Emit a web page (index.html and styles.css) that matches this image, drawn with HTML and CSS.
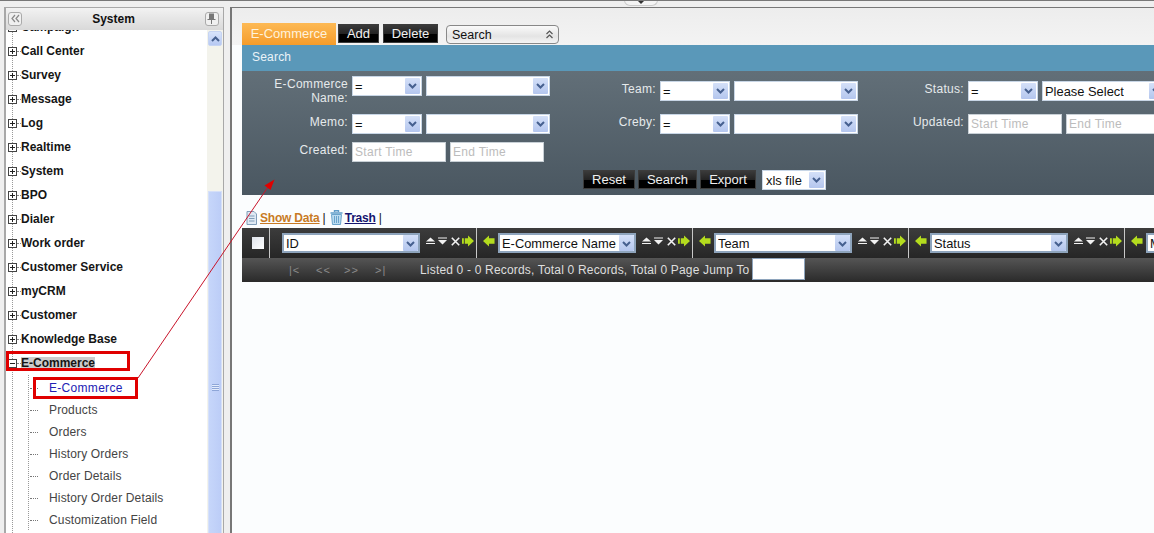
FILE: index.html
```html
<!DOCTYPE html>
<html lang="en">
<head>
<meta charset="utf-8">
<title>E-Commerce</title>
<link rel="stylesheet" href="styles.css">
</head>
<body>
<svg class="defs" width="0" height="0" aria-hidden="true">
  <symbol id="chev" viewBox="0 0 9 6"><path d="M1 1 L4.5 4.5 L8 1" fill="none" stroke="#46608f" stroke-width="2"/></symbol>
  <symbol id="up" viewBox="0 0 9 8"><path d="M4.5 0.5 L9 4.5 H0 Z M0 6 H9 V7 H0 Z" fill="#f2f2f2"/></symbol>
  <symbol id="down" viewBox="0 0 9 8"><path d="M0 0.5 H9 V1.5 H0 Z M0 3 H9 L4.5 7.5 Z" fill="#f2f2f2"/></symbol>
  <symbol id="close" viewBox="0 0 9 9"><path d="M0.8 0.8 L8.2 8.2 M8.2 0.8 L0.8 8.2" stroke="#f2f2f2" stroke-width="1.6" fill="none"/></symbol>
  <symbol id="right" viewBox="0 0 13 12"><path d="M0 3 H2 V9 H0 Z M3 3 H6.5 V0 L13 6 L6.5 12 V9 H3 Z" fill="#b4dc1e"/></symbol>
  <symbol id="left" viewBox="0 0 13 12"><path d="M12.500 3 H6.500 V0 L0 6 L6.500 12 V9 H12.500 Z" fill="#b4dc1e"/></symbol>
</svg>

<div class="page">
  <div class="handle"><svg width="8" height="4" viewBox="0 0 8 4"><path d="M1 0 H7 L4 3 Z" fill="#333"/></svg></div>

  <div class="main">
    <aside class="sidebar">
      <header class="side-head">
        <span class="head-btn"><svg width="9" height="9" viewBox="0 0 9 9"><path d="M4 1 L1 4.5 L4 8 M8 1 L5 4.5 L8 8" fill="none" stroke="#888" stroke-width="1.2"/></svg></span>
        <strong class="side-title">System</strong>
        <span class="head-btn"><svg width="9" height="11" viewBox="0 0 9 11"><path d="M2 0.5 H7 V6 H8.5 V7 H5 V11 H4 V7 H0.5 V6 H2 Z" fill="#777"/></svg></span>
      </header>
      <div class="side-body">
        <nav class="tree-view">
          <ul class="tree">
            <li class="node"><i class="box"></i><span class="dots"></span>Campaign</li>
            <li class="node"><i class="box"></i><span class="dots"></span>Call Center</li>
            <li class="node"><i class="box"></i><span class="dots"></span>Survey</li>
            <li class="node"><i class="box"></i><span class="dots"></span>Message</li>
            <li class="node"><i class="box"></i><span class="dots"></span>Log</li>
            <li class="node"><i class="box"></i><span class="dots"></span>Realtime</li>
            <li class="node"><i class="box"></i><span class="dots"></span>System</li>
            <li class="node"><i class="box"></i><span class="dots"></span>BPO</li>
            <li class="node"><i class="box"></i><span class="dots"></span>Dialer</li>
            <li class="node"><i class="box"></i><span class="dots"></span>Work order</li>
            <li class="node"><i class="box"></i><span class="dots"></span>Customer Service</li>
            <li class="node"><i class="box"></i><span class="dots"></span>myCRM</li>
            <li class="node"><i class="box"></i><span class="dots"></span>Customer</li>
            <li class="node"><i class="box"></i><span class="dots"></span>Knowledge Base</li>
            <li class="node"><i class="box open"></i><span class="dots"></span><span class="picked">E-Commerce</span></li>
          </ul>
          <ul class="subtree">
            <li class="leaf current">E-Commerce</li>
            <li class="leaf">Products</li>
            <li class="leaf">Orders</li>
            <li class="leaf">History Orders</li>
            <li class="leaf">Order Details</li>
            <li class="leaf">History Order Details</li>
            <li class="leaf">Customization Field</li>
          </ul>
        </nav>
        <div class="scrollbar">
          <div class="scroll-up"><svg class="flip" width="9" height="6"><use href="#chev"/></svg></div>
          <div class="scroll-thumb"><span class="grip"></span></div>
        </div>
      </div>
    </aside>

    <main class="content">
      <div class="toolbar">
        <span class="tab">E-Commerce</span>
        <span class="black-btn add">Add</span>
        <span class="black-btn del">Delete</span>
        <span class="mode-select">Search<svg width="9" height="9" viewBox="0 0 9 9"><path d="M1.5 4 L4.5 1 L7.5 4 M1.5 8 L4.5 5 L7.5 8" fill="none" stroke="#555" stroke-width="1.2"/></svg></span>
      </div>
      <div class="search-title">Search</div>
      <form class="search-form">
        <div class="grid">
          <div class="field"><label class="lbl">E-Commerce Name:</label><div class="sel s70"><span>=</span><svg class="arrow"><use href="#chev" x="3" y="5" width="9" height="6"/></svg></div><div class="sel s124"><span></span><svg class="arrow"><use href="#chev" x="3" y="5" width="9" height="6"/></svg></div></div>
          <div class="field mid"><label class="lbl">Team:</label><div class="sel s70"><span>=</span><svg class="arrow"><use href="#chev" x="3" y="5" width="9" height="6"/></svg></div><div class="sel s124"><span></span><svg class="arrow"><use href="#chev" x="3" y="5" width="9" height="6"/></svg></div></div>
          <div class="field mid"><label class="lbl">Status:</label><div class="sel s70"><span>=</span><svg class="arrow"><use href="#chev" x="3" y="5" width="9" height="6"/></svg></div><div class="sel s124"><span>Please Select</span><svg class="arrow"><use href="#chev" x="3" y="5" width="9" height="6"/></svg></div></div>

          <div class="field"><label class="lbl">Memo:</label><div class="sel s70"><span>=</span><svg class="arrow"><use href="#chev" x="3" y="5" width="9" height="6"/></svg></div><div class="sel s124"><span></span><svg class="arrow"><use href="#chev" x="3" y="5" width="9" height="6"/></svg></div></div>
          <div class="field"><label class="lbl">Creby:</label><div class="sel s70"><span>=</span><svg class="arrow"><use href="#chev" x="3" y="5" width="9" height="6"/></svg></div><div class="sel s124"><span></span><svg class="arrow"><use href="#chev" x="3" y="5" width="9" height="6"/></svg></div></div>
          <div class="field"><label class="lbl">Updated:</label><input class="time" placeholder="Start Time"><input class="time" placeholder="End Time"></div>

          <div class="field"><label class="lbl">Created:</label><input class="time" placeholder="Start Time"><input class="time" placeholder="End Time"></div>
        </div>
        <div class="actions">
          <span class="black-btn reset">Reset</span>
          <span class="black-btn search">Search</span>
          <span class="black-btn export">Export</span>
          <div class="sel s64"><span>xls file</span><svg class="arrow"><use href="#chev" x="3" y="5" width="9" height="6"/></svg></div>
        </div>
      </form>

      <div class="links">
        <svg class="link-icon" width="13" height="14" viewBox="0 0 13 14"><path d="M2 0.5 H9 L11.5 3 V13.5 H2 Z" fill="#dfe9f3" stroke="#7f9cb8"/><path d="M4 5 H9.5 M4 7.500 H9.5 M4 10 H9.5" stroke="#7f9cb8"/></svg>
        <a class="link orange">Show Data</a><span class="pipe">|</span>
        <svg class="link-icon trash" width="13" height="15" viewBox="0 0 13 15"><path d="M4.5 2 V0.8 H8.5 V2 M0.5 3 H12.5" stroke="#5f9cc8" fill="none" stroke-width="1.4"/><path d="M1.5 4.5 H11.5 L10.5 14.5 H2.5 Z" fill="#bcdcf0" stroke="#6aa4cc"/><path d="M4.5 6 V13 M6.5 6 V13 M8.5 6 V13" stroke="#6aa4cc"/></svg>
        <a class="link navy">Trash</a><span class="pipe">|</span>
      </div>

      <div class="table-head">
        <div class="cell check-cell"><span class="check"></span></div>
        <div class="cell first">
          <div class="sel tsel"><span>ID</span><svg class="arrow"><use href="#chev" x="3" y="6" width="9" height="6"/></svg></div>
          <div class="tools"><svg class="t9"><use href="#up"/></svg><svg class="t9"><use href="#down"/></svg><svg class="t9 x"><use href="#close"/></svg><svg class="t13"><use href="#right"/></svg></div>
        </div>
        <div class="cell col">
          <svg class="t13 back"><use href="#left"/></svg>
          <div class="sel tsel"><span>E-Commerce Name</span><svg class="arrow"><use href="#chev" x="3" y="6" width="9" height="6"/></svg></div>
          <div class="tools"><svg class="t9"><use href="#up"/></svg><svg class="t9"><use href="#down"/></svg><svg class="t9 x"><use href="#close"/></svg><svg class="t13"><use href="#right"/></svg></div>
        </div>
        <div class="cell col">
          <svg class="t13 back"><use href="#left"/></svg>
          <div class="sel tsel"><span>Team</span><svg class="arrow"><use href="#chev" x="3" y="6" width="9" height="6"/></svg></div>
          <div class="tools"><svg class="t9"><use href="#up"/></svg><svg class="t9"><use href="#down"/></svg><svg class="t9 x"><use href="#close"/></svg><svg class="t13"><use href="#right"/></svg></div>
        </div>
        <div class="cell col">
          <svg class="t13 back"><use href="#left"/></svg>
          <div class="sel tsel"><span>Status</span><svg class="arrow"><use href="#chev" x="3" y="6" width="9" height="6"/></svg></div>
          <div class="tools"><svg class="t9"><use href="#up"/></svg><svg class="t9"><use href="#down"/></svg><svg class="t9 x"><use href="#close"/></svg><svg class="t13"><use href="#right"/></svg></div>
        </div>
        <div class="cell last">
          <svg class="t13 back"><use href="#left"/></svg>
          <div class="sel tsel"><span>Memo</span></div>
        </div>
      </div>
      <div class="pager">
        <span class="pg p1">|&lt;</span><span class="pg p2">&lt;&lt;</span><span class="pg p3">&gt;&gt;</span><span class="pg p4">&gt;|</span>
        <span class="pager-text">Listed 0 - 0 Records, Total 0 Records, Total 0 Page Jump To</span>
        <input class="jump">
      </div>
    </main>
  </div>

  <svg class="annotation" width="1154" height="533" viewBox="0 0 1154 533" aria-hidden="true">
    <rect x="7.5" y="352.5" width="121" height="17" fill="none" stroke="#e00000" stroke-width="3"/>
    <rect x="34.5" y="378.5" width="102" height="19" fill="none" stroke="#e00000" stroke-width="3"/>
    <path d="M138 378 L268 187" stroke="#c8142a" stroke-width="1" fill="none"/>
    <path d="M274.500 179.500 L264.500 185.500 L270.500 190 Z" fill="#e00000"/>
  </svg>
</div>
</body>
</html>
```
FILE: styles.css
```css
* { box-sizing: border-box; }
html, body { margin: 0; padding: 0; }
body { font-family: "Liberation Sans", Arial, sans-serif; font-size: 12px; color: #111; overflow: hidden; }
.defs { position: absolute; }
ul { list-style: none; margin: 0; padding: 0; }

.page { position: relative; width: 1154px; height: 533px; overflow: hidden; background: #efefef; border-top: 1px solid #777; padding-top: 6px; }
.handle { position: absolute; left: 624px; top: -1px; width: 34px; height: 6px; background: #f4f4f4; border: 1px solid #ccc; border-top: 0; border-radius: 0 0 8px 8px; display: flex; justify-content: center; }
.handle svg { margin-top: 1px; }
.main { display: flex; height: 526px; }

/* sidebar */
.sidebar { width: 220px; margin-left: 4px; flex: none; display: flex; flex-direction: column; background: #fff; border: 1px solid #a8a8a8; border-left-width: 2px; border-bottom: 0; }
.side-head { height: 22px; flex: none; display: flex; align-items: center; justify-content: space-between; padding: 0 4px 1px 2px; background: linear-gradient(#f2f2f2, #d9d9d9); }
.side-title { font-size: 12px; }
.head-btn { width: 14px; height: 14px; display: flex; align-items: center; justify-content: center; background: #f0f0f0; border: 1px solid #aaa; border-radius: 3px; }
.side-body { flex: 1; display: flex; min-height: 0; overflow: hidden; }
.tree-view { flex: 1; overflow: hidden; background: linear-gradient(#999 50%, transparent 50%) 6px 0 / 1px 2px repeat-y; }
.tree { margin-top: -15px; padding-left: 2px; }
.node { height: 24px; display: flex; align-items: center; font-weight: bold; color: #151515; white-space: nowrap; }
.box { position: relative; width: 9px; height: 9px; flex: none; background: #fff; border: 1px solid #444; margin-top: 1px; }
.box::before { content: ""; position: absolute; left: 1px; right: 1px; top: 3px; height: 1px; background: #222; }
.box::after { content: ""; position: absolute; top: 1px; bottom: 1px; left: 3px; width: 1px; background: #222; }
.box.open::after { display: none; }
.dots { width: 4px; height: 1px; flex: none; border-top: 1px dotted #888; }
.picked { background: #ccc; line-height: 13px; }
.subtree { padding-top: 2px; margin-left: 22px; background: linear-gradient(#999 50%, transparent 50%) 0 0 / 1px 2px repeat-y; }
.leaf { height: 22px; line-height: 22px; padding-left: 21px; color: #444; letter-spacing: 0.15px; white-space: nowrap; position: relative; }
.leaf::before { content: ""; position: absolute; left: 2px; top: 11px; width: 8px; border-top: 1px dotted #777; }
.leaf.current { color: #2222b4; letter-spacing: 0.3px; }
.scrollbar { width: 16px; flex: none; display: flex; flex-direction: column; background: #f3f3ec; padding: 1px 1px 0; }
.scroll-up { height: 15px; flex: none; display: flex; align-items: center; justify-content: center; background: linear-gradient(#d8e4fb, #b6c8f2); border: 1px solid #c6d4f2; border-radius: 2px; }
.flip { transform: rotate(180deg); }
.scroll-thumb { height: 392px; flex: none; margin-top: 145px; display: flex; align-items: center; justify-content: center; background: linear-gradient(90deg, #c6d6fa, #bccdf7); border: 1px solid #d6e0f8; }
.grip { width: 7px; height: 7px; background: repeating-linear-gradient(#8ea6d8 0 1px, #e4ecfc 1px 2px); }

/* content */
.content { flex: 1; min-width: 0; margin-left: 6px; background: #fbfdfe; border-left: 2px solid #777; border-top: 1px solid #777; overflow: hidden; }
.toolbar { height: 37px; display: flex; align-items: flex-start; padding: 15px 0 0 10px; background: linear-gradient(#ededed, #f3f3f3); }
.tab { width: 94px; height: 22px; line-height: 21px; text-align: center; color: #fff2dc; font-size: 13px; background: linear-gradient(#fdb954, #f59c2b); }
.black-btn { display: block; height: 19px; line-height: 17px; text-align: center; color: #f0f0f0; font-size: 13px; background: linear-gradient(#3a3a3a 0, #222 55%, #000 55%, #000 100%); border: 1px solid #3c3c3c; }
.add { width: 41px; margin: 1px 0 0 2px; }
.del { width: 55px; margin: 1px 0 0 4px; }
.mode-select { width: 113px; height: 19px; margin: 2px 0 0 8px; padding: 0 4px 0 5px; display: flex; align-items: center; justify-content: space-between; font-size: 12.5px; color: #111; border: 1px solid #888; border-radius: 4px; background: linear-gradient(#fafafa, #e4e4e4 60%, #f4f4f4); }
.search-title { margin-left: 10px; height: 26px; line-height: 25px; padding-left: 10px; color: #eaf3f8; letter-spacing: 0.2px; background: #5a98b9; }
.search-form { margin-left: 10px; height: 124px; padding-top: 5px; overflow: hidden; background: linear-gradient(#626f78, #4a5761); }
.grid { display: grid; grid-template-columns: 308px 308px 308px; grid-template-rows: 30px 20px 20px; row-gap: 8px; }
.field { display: flex; align-items: flex-start; gap: 4px; white-space: nowrap; }
.field.mid { align-self: center; }
.lbl { width: 106px; flex: none; text-align: right; white-space: normal; color: #e6eaec; line-height: 14px; letter-spacing: 0.3px; padding: 1px 0 0 30px; }
.sel { display: flex; align-items: center; justify-content: space-between; height: 20px; background: #fff; border: 1px solid #c8d6e6; padding-left: 2px; font-size: 12.9px; color: #111; overflow: hidden; white-space: nowrap; flex: none; }
.sel span { overflow: hidden; }
.arrow { width: 15px; height: 16px; flex: none; margin-right: 1px; background: linear-gradient(#d4e0f8, #b4c6ee); border-radius: 1px; }
.s70 { width: 70px; }
.s124 { width: 124px; }
.s64 { width: 64px; margin-left: 6px; padding-left: 3px; }
.time { width: 94px; height: 20px; flex: none; padding: 0 0 0 2px; border: 1px solid #c8d0d6; background: #fff; font: 12px "Liberation Sans", Arial, sans-serif; letter-spacing: 0.3px; }
.time::placeholder { color: #bcbcbc; opacity: 1; }
.actions { display: flex; align-items: flex-start; padding: 8px 0 0 341px; }
.reset { width: 52px; }
.search { width: 59px; margin-left: 3px; }
.export { width: 56px; margin-left: 3px; }

.links { height: 33px; display: flex; align-items: center; padding: 12px 0 0 13px; white-space: nowrap; color: #111; }
.link-icon { flex: none; }
.link { font-weight: bold; text-decoration: underline; margin-left: 2px; letter-spacing: -0.2px; }
.orange { color: #c87a24; }
.navy { color: #14146e; }
.pipe { margin-left: 3px; }
.trash { margin-left: 4px; }

.table-head { margin-left: 10px; height: 30px; display: flex; background: linear-gradient(#3c3c3c, #262626); }
.cell { height: 30px; display: flex; align-items: center; flex: none; border-right: 1px solid #c8c8c8; }
.check-cell { width: 28px; padding-left: 10px; }
.check { width: 12px; height: 12px; background: linear-gradient(135deg, #dfe3ea, #fff); }
.first { width: 207px; padding-left: 12px; }
.col { width: 216px; padding-left: 6px; }
.last { width: 60px; padding-left: 6px; border-right: 0; }
.tsel { width: 138px; border: 2px solid #8ea4bc; padding-left: 2px; }
.tsel .arrow { height: 16px; margin-right: 0; }
.back { margin-right: 3px; margin-top: -4px; }
.t13 { width: 12px; height: 12px; flex: none; }
.t9 { width: 9px; height: 8px; flex: none; margin-right: 3px; }
.t9.x { height: 9px; margin: 0 2px 0 1px; }
.tools { display: flex; align-items: center; margin-left: 6px; margin-top: -4px; }
.pager { margin-left: 10px; height: 24px; display: flex; align-items: center; position: relative; color: #dedede; background: linear-gradient(#555, #2a2a2a); white-space: nowrap; }
.pg { color: #8a8a8a; font-size: 11px; flex: none; letter-spacing: 1px; }
.p1 { margin-left: 47px; width: 27px; }
.p2 { width: 28px; }
.p3 { width: 31px; }
.p4 { width: 45px; }
.pager-text { letter-spacing: 0.18px; }
.jump { width: 53px; height: 22px; margin: -2px 0 0 3px; padding: 0; background: #fff; border: 1px solid #8ea4bc; }

.annotation { position: absolute; left: 0; top: -1px; pointer-events: none; }
```
